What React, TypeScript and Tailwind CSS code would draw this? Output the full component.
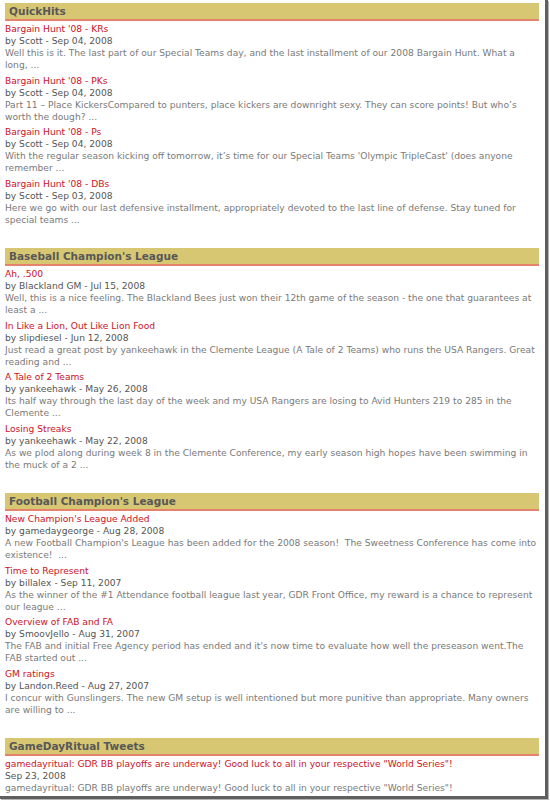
type Post = {
  title: string;
  by: string;
  date: string;
  text: string;
};

const sections: { name: string; posts: Post[] }[] = [
  {
    name: "QuickHits",
    posts: [
      {
        title: "Bargain Hunt '08 - KRs",
        by: "Scott",
        date: "Sep 04, 2008",
        text: "Well this is it. The last part of our Special Teams day, and the last installment of our 2008 Bargain Hunt. What a long, ...",
      },
      {
        title: "Bargain Hunt '08 - PKs",
        by: "Scott",
        date: "Sep 04, 2008",
        text: "Part 11 \u2013 Place KickersCompared to punters, place kickers are downright sexy. They can score points! But who\u2019s worth the dough? ...",
      },
      {
        title: "Bargain Hunt '08 - Ps",
        by: "Scott",
        date: "Sep 04, 2008",
        text: "With the regular season kicking off tomorrow, it\u2019s time for our Special Teams 'Olympic TripleCast' (does anyone remember ...",
      },
      {
        title: "Bargain Hunt '08 - DBs",
        by: "Scott",
        date: "Sep 03, 2008",
        text: "Here we go with our last defensive installment, appropriately devoted to the last line of defense. Stay tuned for special teams ...",
      },
    ],
  },
  {
    name: "Baseball Champion's League",
    posts: [
      {
        title: "Ah, .500",
        by: "Blackland GM",
        date: "Jul 15, 2008",
        text: "Well, this is a nice feeling. The Blackland Bees just won their 12th game of the season - the one that guarantees at least a ...",
      },
      {
        title: "In Like a Lion, Out Like Lion Food",
        by: "slipdiesel",
        date: "Jun 12, 2008",
        text: "Just read a great post by yankeehawk in the Clemente League (A Tale of 2 Teams) who runs the USA Rangers. Great reading and ...",
      },
      {
        title: "A Tale of 2 Teams",
        by: "yankeehawk",
        date: "May 26, 2008",
        text: "Its half way through the last day of the week and my USA Rangers are losing to Avid Hunters 219 to 285 in the Clemente ...",
      },
      {
        title: "Losing Streaks",
        by: "yankeehawk",
        date: "May 22, 2008",
        text: "As we plod along during week 8 in the Clemente Conference, my early season high hopes have been swimming in the muck of a 2 ...",
      },
    ],
  },
  {
    name: "Football Champion's League",
    posts: [
      {
        title: "New Champion's League Added",
        by: "gamedaygeorge",
        date: "Aug 28, 2008",
        text: "A new Football Champion's League has been added for the 2008 season!\u00a0 The Sweetness Conference has come into existence!\u00a0 ...",
      },
      {
        title: "Time to Represent",
        by: "billalex",
        date: "Sep 11, 2007",
        text: "As the winner of the #1 Attendance football league last year, GDR Front Office, my reward is a chance to represent our league ...",
      },
      {
        title: "Overview of FAB and FA",
        by: "SmoovJello",
        date: "Aug 31, 2007",
        text: "The FAB and initial Free Agency period has ended and it's now time to evaluate how well the preseason went.The FAB started out ...",
      },
      {
        title: "GM ratings",
        by: "Landon.Reed",
        date: "Aug 27, 2007",
        text: "I concur with Gunslingers. The new GM setup is well intentioned but more punitive than appropriate. Many owners are willing to ...",
      },
    ],
  },
];

const tweet = "gamedayritual: GDR BB playoffs are underway! Good luck to all in your respective \"World Series\"!";

function Header({ name }: { name: string }) {
  return (
    <div className="h-[18px] bg-[#d7c672] border-b-2 border-[#e4826b] pl-[4px] text-[10.5px] leading-[16px] font-bold text-[#585858]">
      {name}
    </div>
  );
}

function PostItem({ post }: { post: Post }) {
  return (
    <div className="mb-[3.5px]">
      <div className="text-[#d0101e]">{post.title}</div>
      <div className="text-[#555]">
        by {post.by} - {post.date}
      </div>
      <div className="text-[#7a7a7a]">{post.text}</div>
    </div>
  );
}

export default function App() {
  return (
    <div className="w-[550px] h-[800px] bg-white overflow-hidden">
      <div
        className="w-[548px] h-[799px] border-r-[3px] border-b-[3px] border-[#5f5f5f] shadow-[1px_1px_0_#b5b5b5] pt-[3px] pl-[5px] pr-[6px] text-[9.15px] leading-[12px]"
        style={{ fontFamily: '"DejaVu Sans", Verdana, sans-serif' }}
      >
        {sections.map((s) => (
          <div key={s.name} className="mb-[22.5px]">
            <Header name={s.name} />
            <div className="pt-[2px]">
              {s.posts.map((p) => (
                <PostItem key={p.title} post={p} />
              ))}
            </div>
          </div>
        ))}
        <Header name="GameDayRitual Tweets" />
        <div className="pt-[2px]">
          <div className="text-[#d0101e]">{tweet}</div>
          <div className="text-[#555]">Sep 23, 2008</div>
          <div className="text-[#7a7a7a]">{tweet}</div>
        </div>
      </div>
    </div>
  );
}
